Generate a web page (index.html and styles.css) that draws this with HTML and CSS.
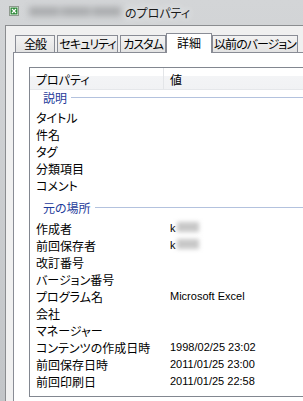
FILE: index.html
```html
<!DOCTYPE html>
<html lang="ja">
<head>
    <meta charset="UTF-8">
    <title>のプロパティ</title>
    <link rel="stylesheet" href="styles.css">
</head>
<body>
    <div class="window">
        <!-- タイトルバー -->
        <div class="titlebar">
            <svg class="app-icon" width="10" height="10" viewBox="0 0 10 10">
                <rect x="0.5" y="0.5" width="9" height="9" fill="#f4f4f4" stroke="#8f9a8f"/>
                <rect x="1.5" y="1.5" width="7" height="7" fill="#2f8a3a"/>
                <path d="M3 3 L7 7 M7 3 L3 7" stroke="#fff" stroke-width="1.2"/>
            </svg>
            <span class="file-name"></span>
            <span class="title-text">のプロパティ</span>
        </div>

        <div class="client">
            <!-- タブ -->
            <div class="tabs">
                <div class="tab tab-general">全般</div>
                <div class="tab tab-security">セキュリティ</div>
                <div class="tab tab-custom">カスタム</div>
                <div class="tab tab-active">詳細</div>
                <div class="tab tab-versions">以前のバージョン</div>
            </div>

            <div class="panel">
                <div class="list">
                    <div class="list-header">
                        <div class="col-name">プロパティ</div>
                        <div class="col-value">値</div>
                    </div>

                    <div class="group first-group"><span>説明</span></div>
                    <div class="row"><div class="name">タイトル</div><div class="value"></div></div>
                    <div class="row"><div class="name">件名</div><div class="value"></div></div>
                    <div class="row"><div class="name">タグ</div><div class="value"></div></div>
                    <div class="row"><div class="name">分類項目</div><div class="value"></div></div>
                    <div class="row"><div class="name">コメント</div><div class="value"></div></div>

                    <div class="group"><span>元の場所</span></div>
                    <div class="row"><div class="name">作成者</div><div class="value">k<span class="smudge"></span></div></div>
                    <div class="row"><div class="name">前回保存者</div><div class="value">k<span class="smudge"></span></div></div>
                    <div class="row"><div class="name">改訂番号</div><div class="value"></div></div>
                    <div class="row"><div class="name">バージョン番号</div><div class="value"></div></div>
                    <div class="row"><div class="name">プログラム名</div><div class="value">Microsoft Excel</div></div>
                    <div class="row"><div class="name">会社</div><div class="value"></div></div>
                    <div class="row"><div class="name">マネージャー</div><div class="value"></div></div>
                    <div class="row"><div class="name">コンテンツの作成日時</div><div class="value">1998/02/25 23:02</div></div>
                    <div class="row"><div class="name">前回保存日時</div><div class="value">2011/01/25 23:00</div></div>
                    <div class="row"><div class="name">前回印刷日</div><div class="value">2011/01/25 22:58</div></div>
                </div>
            </div>
        </div>
    </div>
</body>
</html>
```

FILE: styles.css
```css
body {
    margin: 0;
    width: 303px;
    height: 401px;
    overflow: hidden;
    font-family: "Noto Sans CJK JP", sans-serif;
    font-size: 12px;
    font-feature-settings: "palt";
    color: #000;
}
.window {
    height: 401px;
    display: flex;
    flex-direction: column;
    background: linear-gradient(#d3d5d7, #c2c5c8);
}
.titlebar {
    height: 25px;
    flex: none;
    display: flex;
    align-items: center;
    padding-left: 9px;
}
.app-icon {
    flex: none;
    margin-top: -3px;
}
.file-name {
    width: 92px;
    height: 9px;
    margin-left: 10px;
    margin-top: -2px;
    background: linear-gradient(90deg, #a9abad 0, #a9abad 30%, #bcbec0 34%, #a9abad 38%, #a9abad 64%, #bcbec0 68%, #a9abad 72%);
    filter: blur(3px);
}
.title-text {
    margin-left: 4px;
    margin-top: -1px;
    color: #1b1b1b;
    text-shadow: 0 0 6px #eceef0, 0 0 10px #eceef0;
}
.client {
    flex: 1;
    min-height: 0;
    display: flex;
    flex-direction: column;
    margin-left: 5px;
    border-left: 1px solid #8b8d90;
    border-top: 1px solid #8b8d90;
    background: #f0f0f0;
    padding: 7px 0 0 7px;
    overflow: hidden;
}
.tabs {
    position: relative;
    z-index: 1;
    flex: none;
    display: flex;
    align-items: flex-end;
    gap: 2px;
    height: 19px;
    margin-left: 2px;
}
.tab {
    box-sizing: border-box;
    flex: none;
    height: 17px;
    border: 1px solid #898c95;
    border-bottom: none;
    background: linear-gradient(#f3f3f3, #e3e3e3);
    line-height: 16px;
    letter-spacing: -1px;
    text-align: center;
    white-space: nowrap;
    overflow: hidden;
}
.tab-general { width: 40px; }
.tab-security { width: 61px; }
.tab-custom { width: 46px; }
.tab-versions { width: 86px; }
.tab-active {
    width: 46px;
    height: 20px;
    margin: 0 -2px -1px;
    background: #fff;
    line-height: 17px;
    letter-spacing: 0;
}
.panel {
    flex: 1;
    min-height: 0;
    border-top: 1px solid #898c95;
    border-left: 1px solid #898c95;
    background: #fff;
    padding: 14px 0 0 15px;
}
.list {
    box-sizing: border-box;
    height: 330px;
    border: 1px solid #828790;
    border-right: none;
}
.list-header {
    display: flex;
    height: 21px;
    border-bottom: 1px solid #e5e7ea;
    background: linear-gradient(#fff 0, #fff 40%, #f3f4f6 40%, #f1f2f4 100%);
}
.col-name {
    width: 127px;
    padding: 3px 0 0 6px;
    line-height: 18px;
    border-right: 1px solid #e3e5e8;
}
.col-value {
    padding: 3px 0 0 6px;
    line-height: 18px;
}
.group {
    display: flex;
    align-items: center;
    height: 15px;
    padding: 6px 0 5px 13px;
    color: #1e3a9a;
}
.first-group {
    padding: 0 0 4px 13px;
}
.group span {
    margin-right: 4px;
}
.group::after {
    content: "";
    flex: 1;
    height: 1px;
    background: #b3c2de;
}
.row {
    display: flex;
    height: 17px;
    line-height: 17px;
}
.name {
    width: 134px;
    padding-left: 6px;
    white-space: nowrap;
}
.value {
    font-family: "Liberation Sans", sans-serif;
    font-size: 11px;
    white-space: nowrap;
}
.smudge {
    display: inline-block;
    width: 22px;
    height: 10px;
    margin-left: 1px;
    background: #c8c8c8;
    filter: blur(2px);
}
```
